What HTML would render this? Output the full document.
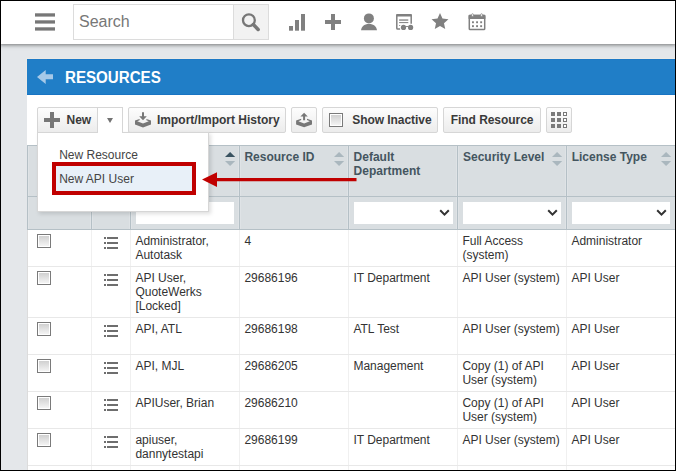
<!DOCTYPE html><html><head><meta charset="utf-8"><style>
*{box-sizing:border-box;margin:0;padding:0}
html,body{width:676px;height:471px;overflow:hidden;background:#e4e7ea;font-family:"Liberation Sans",sans-serif;position:relative}
.a{position:absolute}
.t{position:absolute;white-space:nowrap;font-size:12px;line-height:14px;color:#333}
.b{font-weight:bold}
#hdr{left:0;top:0;width:676px;height:44px;background:#fff;box-shadow:0 1px 4px rgba(0,0,0,.5)}
.btn{position:absolute;top:107px;height:26px;border:1px solid #d6d6d6;border-radius:2px;background:linear-gradient(#fdfdfd,#ececec)}
.cb{position:absolute;width:14px;height:14px;border:1px solid #7a7a7a;background:linear-gradient(#cdcdcd,#f7f7f7);box-shadow:inset 0 0 0 1px #fff}
.sort{position:absolute;width:10px;height:14px}
.sel{position:absolute;top:202px;height:22px;background:#fff}
</style></head><body><div id="hdr" class="a"></div>
<svg class="a" style="left:35px;top:13px" width="20" height="4" viewBox="0 0 20 4"><rect x="0" y="0.3" width="20" height="3.3" fill="#777"/></svg>
<svg class="a" style="left:35px;top:20px" width="20" height="4" viewBox="0 0 20 4"><rect x="0" y="0.3" width="20" height="3.3" fill="#777"/></svg>
<svg class="a" style="left:35px;top:27px" width="20" height="4" viewBox="0 0 20 4"><rect x="0" y="0.3" width="20" height="3.3" fill="#777"/></svg>
<div class="a" style="left:73px;top:4px;width:196px;height:36px;border:1px solid #dcdcdc;background:#fff"></div>
<div class="a" style="left:233px;top:5px;width:35px;height:34px;border-left:1px solid #dcdcdc;background:#f2f2f2"></div>
<div class="t " style="left:79px;top:13px;font-size:16px;line-height:18px;color:#777">Search</div>
<svg class="a" style="left:238px;top:10px" width="24" height="24" viewBox="0 0 24 24"><circle cx="10.9" cy="10.2" r="5.9" fill="none" stroke="#777" stroke-width="2.3"/><path d="M15.3 14.6 L20.1 19.4" stroke="#777" stroke-width="3.6" stroke-linecap="round"/></svg>
<svg class="a" style="left:280px;top:8px" width="30" height="26" viewBox="280 8 30 26"><rect x="289" y="26" width="4" height="4.7" fill="#808080"/><rect x="295" y="20" width="4" height="10.7" fill="#808080"/><rect x="301" y="14" width="4" height="16.7" fill="#808080"/></svg>
<svg class="a" style="left:320px;top:8px" width="26" height="26" viewBox="320 8 26 26"><rect x="325" y="20" width="16" height="4" fill="#808080"/><rect x="331" y="14" width="4" height="16" fill="#808080"/></svg>
<svg class="a" style="left:356px;top:8px" width="26" height="26" viewBox="356 8 26 26"><circle cx="368.9" cy="18.4" r="5.0" fill="#808080"/><path d="M361 30.3 C361.5 26.5 364 24 369 24 C374 24 376.5 26.5 377 30.3 Z" fill="#808080"/></svg>
<svg class="a" style="left:390px;top:8px" width="26" height="26" viewBox="390 8 26 26"><path d="M411.2 23.8 V15.6 Q411.2 14.9 410.4 14.9 H397.6 Q396.8 14.9 396.8 15.6 V28.2 Q396.8 29 397.6 29 H400.2" fill="none" stroke="#808080" stroke-width="1.5"/><rect x="396.1" y="14.1" width="15.8" height="2.4" rx="1" fill="#808080"/><rect x="399.1" y="19.4" width="9.2" height="1.3" fill="#808080"/><rect x="399.1" y="22.1" width="9.2" height="1" fill="#808080"/><circle cx="403.5" cy="27.4" r="3.3" fill="#fff"/><circle cx="410.6" cy="27.4" r="3.3" fill="#fff"/><circle cx="403.5" cy="27.4" r="2.6" fill="#808080"/><circle cx="410.6" cy="27.4" r="2.6" fill="#808080"/><rect x="405.5" y="26.1" width="3" height="0.9" fill="#808080"/><rect x="399.2" y="25" width="1" height="1" fill="#808080"/></svg>
<svg class="a" style="left:428px;top:8px" width="24" height="24" viewBox="428 8 24 24"><path d="M440.00 13.00 L442.47 18.50 L448.46 19.15 L443.99 23.20 L445.23 29.10 L440.00 26.10 L434.77 29.10 L436.01 23.20 L431.54 19.15 L437.53 18.50 Z" fill="#808080"/></svg>
<svg class="a" style="left:465px;top:8px" width="24" height="26" viewBox="465 8 24 26"><rect x="469.3" y="15.6" width="15.4" height="13.9" rx="0.8" fill="none" stroke="#808080" stroke-width="1.5"/><rect x="468.6" y="14.8" width="16.8" height="4.2" rx="0.6" fill="#808080"/><rect x="471.7" y="13.7" width="1.7" height="2.9" rx="0.85" fill="#fff" stroke="#808080" stroke-width="0.7"/><rect x="480.7" y="13.7" width="1.7" height="2.9" rx="0.85" fill="#fff" stroke="#808080" stroke-width="0.7"/><rect x="472.0" y="21.3" width="1.9" height="1.9" fill="#808080"/><rect x="472.0" y="25.200000000000003" width="1.9" height="1.9" fill="#808080"/><rect x="476.1" y="21.3" width="1.9" height="1.9" fill="#808080"/><rect x="476.1" y="25.200000000000003" width="1.9" height="1.9" fill="#808080"/><rect x="480.20000000000005" y="21.3" width="1.9" height="1.9" fill="#808080"/><rect x="480.20000000000005" y="25.200000000000003" width="1.9" height="1.9" fill="#808080"/></svg>
<div class="a" style="left:26px;top:58px;width:650px;height:37px;background:#ebeae6"></div>
<div class="a" style="left:27px;top:59px;width:649px;height:36px;background:#207ec7;border-top:1px solid #1c79c6;border-bottom:1px solid #1874c3"></div>
<div class="a" style="left:27px;top:95px;width:649px;height:380px;background:#fff"></div>
<svg class="a" style="left:35px;top:68px" width="20" height="18" viewBox="35 68 20 18"><path d="M37 77 L45.7 70 V74.3 H53 V79.2 H45.7 V84 Z" fill="#a6c9e8"/></svg>
<div class="t b" style="left:65.2px;top:69px;font-size:16px;line-height:18px;color:#fff;transform:scaleX(0.945);transform-origin:0 0">RESOURCES</div>
<div class="btn" style="left:37px;width:61px;border-radius:2px 0 0 0;z-index:6"></div>
<div class="a" style="left:97px;top:107px;width:26px;height:26px;border:1px solid #d6d6d6;border-bottom:none;background:#fff;z-index:5"></div>
<svg class="a" style="left:44px;top:112px;z-index:6" width="16" height="16" viewBox="0 0 16 16"><rect x="0" y="6" width="16" height="4" fill="#777"/><rect x="6" y="0" width="4" height="16" fill="#777"/></svg>
<div class="t b" style="left:66.5px;top:112.7px;color:#3a3a3a;z-index:7">New</div>
<svg class="a" style="left:106px;top:117px;z-index:6" width="8" height="7" viewBox="106 117 8 7"><path d="M107 118 H113 L110 123 Z" fill="#737373"/></svg>
<div class="btn" style="left:128px;width:158px"></div>
<svg class="a" style="left:133px;top:110px" width="20" height="20" viewBox="133 110 20 20"><path d="M142 112.3 H144 V116.3 H146.8 L143 120.2 L139.2 116.3 H142 Z" fill="#777"/><path d="M135 120.5 L139.6 119 V120.3 L137.2 121.3 L143 123.5 L148.8 121.3 L146.4 120.3 V119 L151 120.5 V124.4 L143 127.4 L135 124.4 Z" fill="#777"/></svg>
<div class="t b" style="left:157px;top:112.7px;color:#3a3a3a">Import/Import History</div>
<div class="btn" style="left:291px;width:26px"></div>
<svg class="a" style="left:294px;top:110px" width="20" height="20" viewBox="294 110 20 20"><path d="M304.1 112.8 L307.8 116.4 H305.1 V120.2 H303.1 V116.4 H300.4 Z" fill="#777"/><path d="M296.1 120.5 L301.2 118.7 V120 L298.4 121.2 L304.1 123.5 L309.8 121.2 L307 120 V118.7 L312 120.5 V124.4 L304.1 127.2 L296.1 124.4 Z" fill="#777"/></svg>
<div class="btn" style="left:322px;width:116px"></div>
<div class="cb" style="left:329px;top:113px"></div>
<div class="t b" style="left:352.3px;top:112.7px;color:#3a3a3a;letter-spacing:-0.06px">Show Inactive</div>
<div class="btn" style="left:443px;width:98px"></div>
<div class="t b" style="left:450.8px;top:112.7px;color:#3a3a3a;letter-spacing:-0.06px">Find Resource</div>
<div class="btn" style="left:546px;width:26px"></div>
<svg class="a" style="left:546px;top:107px" width="26" height="26" viewBox="546 107 26 26"><rect x="551" y="112" width="4" height="4" fill="#7a7a7a"/><rect x="557" y="112" width="4" height="4" fill="#7a7a7a"/><rect x="563.5" y="112.5" width="3" height="3" fill="#fff" stroke="#777" stroke-width="1"/><rect x="551" y="118" width="4" height="4" fill="#7a7a7a"/><rect x="557" y="118" width="4" height="4" fill="#7a7a7a"/><rect x="563.5" y="118.5" width="3" height="3" fill="#fff" stroke="#777" stroke-width="1"/><rect x="551" y="124" width="4" height="4" fill="#7a7a7a"/><rect x="557" y="124" width="4" height="4" fill="#7a7a7a"/><rect x="563.5" y="124.5" width="3" height="3" fill="#fff" stroke="#777" stroke-width="1"/></svg>
<div class="a" style="left:27px;top:145px;width:648px;height:84px;background:#d9dee1;border-top:1px solid #b5c0c6"></div>
<div class="a" style="left:90px;top:146px;width:3px;height:83px;background:#dfe3e6"></div>
<div class="a" style="left:129px;top:146px;width:3px;height:83px;background:#dfe3e6"></div>
<div class="a" style="left:238px;top:146px;width:3px;height:83px;background:#dfe3e6"></div>
<div class="a" style="left:347px;top:146px;width:3px;height:83px;background:#dfe3e6"></div>
<div class="a" style="left:456px;top:146px;width:3px;height:83px;background:#dfe3e6"></div>
<div class="a" style="left:565px;top:146px;width:3px;height:83px;background:#dfe3e6"></div>
<div class="a" style="left:28px;top:146px;width:1px;height:83px;background:#dfe3e6"></div>
<div class="a" style="left:27px;top:196px;width:648px;height:1px;background:#b5c0c6"></div>
<div class="a" style="left:27px;top:229px;width:648px;height:1px;background:#b5c0c6"></div>
<div class="a" style="left:27px;top:145px;width:1px;height:84px;background:#b5c0c6"></div>
<div class="a" style="left:91px;top:145px;width:1px;height:84px;background:#b5c0c6"></div>
<div class="a" style="left:130px;top:145px;width:1px;height:84px;background:#b5c0c6"></div>
<div class="a" style="left:239px;top:145px;width:1px;height:84px;background:#b5c0c6"></div>
<div class="a" style="left:348px;top:145px;width:1px;height:84px;background:#b5c0c6"></div>
<div class="a" style="left:457px;top:145px;width:1px;height:84px;background:#b5c0c6"></div>
<div class="a" style="left:566px;top:145px;width:1px;height:84px;background:#b5c0c6"></div>
<div class="a" style="left:91px;top:230px;width:1px;height:241px;background:#f0f0f0"></div>
<div class="a" style="left:130px;top:230px;width:1px;height:241px;background:#f0f0f0"></div>
<div class="a" style="left:239px;top:230px;width:1px;height:241px;background:#f0f0f0"></div>
<div class="a" style="left:348px;top:230px;width:1px;height:241px;background:#f0f0f0"></div>
<div class="a" style="left:457px;top:230px;width:1px;height:241px;background:#f0f0f0"></div>
<div class="a" style="left:566px;top:230px;width:1px;height:241px;background:#f0f0f0"></div>
<div class="a" style="left:27px;top:230px;width:1px;height:241px;background:#dcdcdc"></div>
<div class="a" style="left:28px;top:266px;width:647px;height:1px;background:#e8e8e8"></div>
<div class="a" style="left:28px;top:317px;width:647px;height:1px;background:#e8e8e8"></div>
<div class="a" style="left:28px;top:354px;width:647px;height:1px;background:#e8e8e8"></div>
<div class="a" style="left:28px;top:391px;width:647px;height:1px;background:#e8e8e8"></div>
<div class="a" style="left:28px;top:428px;width:647px;height:1px;background:#e8e8e8"></div>
<div class="a" style="left:28px;top:465px;width:647px;height:1px;background:#e8e8e8"></div>
<div class="t b" style="left:244.4px;top:150px;color:#44555f">Resource ID</div>
<div class="t b" style="left:353.6px;top:150px;color:#44555f">Default<br>Department</div>
<div class="t b" style="left:463px;top:150px;color:#44555f">Security Level</div>
<div class="t b" style="left:571.7px;top:150px;color:#44555f">License Type</div>
<svg class="a" style="left:224.5px;top:151px" width="11" height="16" viewBox="0 0 11 16"><path d="M0 6.1 L5.1 0.9 L10.2 6.1 Z" fill="#3a5361"/><path d="M0 9.9 L5.1 14.9 L10.2 9.9 Z" fill="#aab7be"/></svg>
<svg class="a" style="left:333.5px;top:151px" width="11" height="16" viewBox="0 0 11 16"><path d="M0 6.1 L5.1 0.9 L10.2 6.1 Z" fill="#aab7be"/><path d="M0 9.9 L5.1 14.9 L10.2 9.9 Z" fill="#aab7be"/></svg>
<svg class="a" style="left:551.5px;top:151px" width="11" height="16" viewBox="0 0 11 16"><path d="M0 6.1 L5.1 0.9 L10.2 6.1 Z" fill="#aab7be"/><path d="M0 9.9 L5.1 14.9 L10.2 9.9 Z" fill="#aab7be"/></svg>
<svg class="a" style="left:660.5px;top:151px" width="11" height="16" viewBox="0 0 11 16"><path d="M0 6.1 L5.1 0.9 L10.2 6.1 Z" fill="#aab7be"/><path d="M0 9.9 L5.1 14.9 L10.2 9.9 Z" fill="#aab7be"/></svg>
<div class="sel" style="left:136px;width:98px"></div>
<div class="sel" style="left:354px;width:98.5px"></div>
<svg class="a" style="left:438.5px;top:208px" width="11" height="9" viewBox="0 0 11 9"><path d="M1.2 2.2 L5.5 6.6 L9.8 2.2" fill="none" stroke="#333" stroke-width="2"/></svg>
<div class="sel" style="left:462.5px;width:98.5px"></div>
<svg class="a" style="left:547.0px;top:208px" width="11" height="9" viewBox="0 0 11 9"><path d="M1.2 2.2 L5.5 6.6 L9.8 2.2" fill="none" stroke="#333" stroke-width="2"/></svg>
<div class="sel" style="left:571.5px;width:98.5px"></div>
<svg class="a" style="left:656.0px;top:208px" width="11" height="9" viewBox="0 0 11 9"><path d="M1.2 2.2 L5.5 6.6 L9.8 2.2" fill="none" stroke="#333" stroke-width="2"/></svg>
<div class="cb" style="left:37px;top:234px"></div>
<svg class="a" style="left:104px;top:229px" width="16" height="24" viewBox="0 0 16 24"><rect x="0" y="8" width="2" height="2" fill="#6e6e6e"/><rect x="3" y="8" width="11" height="2" fill="#6e6e6e"/><rect x="0" y="13" width="2" height="2" fill="#6e6e6e"/><rect x="3" y="13" width="11" height="2" fill="#6e6e6e"/><rect x="0" y="18" width="2" height="2" fill="#6e6e6e"/><rect x="3" y="18" width="11" height="2" fill="#6e6e6e"/></svg>
<div class="t " style="left:135.4px;top:234px;">Administrator,<br>Autotask</div>
<div class="t " style="left:244.4px;top:234px;">4</div>
<div class="t " style="left:462.4px;top:234px;">Full Access<br>(system)</div>
<div class="t " style="left:571.4px;top:234px;">Administrator</div>
<div class="cb" style="left:37px;top:271px"></div>
<svg class="a" style="left:104px;top:266px" width="16" height="24" viewBox="0 0 16 24"><rect x="0" y="8" width="2" height="2" fill="#6e6e6e"/><rect x="3" y="8" width="11" height="2" fill="#6e6e6e"/><rect x="0" y="13" width="2" height="2" fill="#6e6e6e"/><rect x="3" y="13" width="11" height="2" fill="#6e6e6e"/><rect x="0" y="18" width="2" height="2" fill="#6e6e6e"/><rect x="3" y="18" width="11" height="2" fill="#6e6e6e"/></svg>
<div class="t " style="left:135.4px;top:271px;">API User,<br>QuoteWerks<br>[Locked]</div>
<div class="t " style="left:244.4px;top:271px;">29686196</div>
<div class="t " style="left:353.4px;top:271px;">IT Department</div>
<div class="t " style="left:462.4px;top:271px;">API User (system)</div>
<div class="t " style="left:571.4px;top:271px;">API User</div>
<div class="cb" style="left:37px;top:322px"></div>
<svg class="a" style="left:104px;top:317px" width="16" height="24" viewBox="0 0 16 24"><rect x="0" y="8" width="2" height="2" fill="#6e6e6e"/><rect x="3" y="8" width="11" height="2" fill="#6e6e6e"/><rect x="0" y="13" width="2" height="2" fill="#6e6e6e"/><rect x="3" y="13" width="11" height="2" fill="#6e6e6e"/><rect x="0" y="18" width="2" height="2" fill="#6e6e6e"/><rect x="3" y="18" width="11" height="2" fill="#6e6e6e"/></svg>
<div class="t " style="left:135.4px;top:322px;">API, ATL</div>
<div class="t " style="left:244.4px;top:322px;">29686198</div>
<div class="t " style="left:353.4px;top:322px;">ATL Test</div>
<div class="t " style="left:462.4px;top:322px;">API User (system)</div>
<div class="t " style="left:571.4px;top:322px;">API User</div>
<div class="cb" style="left:37px;top:359px"></div>
<svg class="a" style="left:104px;top:354px" width="16" height="24" viewBox="0 0 16 24"><rect x="0" y="8" width="2" height="2" fill="#6e6e6e"/><rect x="3" y="8" width="11" height="2" fill="#6e6e6e"/><rect x="0" y="13" width="2" height="2" fill="#6e6e6e"/><rect x="3" y="13" width="11" height="2" fill="#6e6e6e"/><rect x="0" y="18" width="2" height="2" fill="#6e6e6e"/><rect x="3" y="18" width="11" height="2" fill="#6e6e6e"/></svg>
<div class="t " style="left:135.4px;top:359px;">API, MJL</div>
<div class="t " style="left:244.4px;top:359px;">29686205</div>
<div class="t " style="left:353.4px;top:359px;">Management</div>
<div class="t " style="left:462.4px;top:359px;">Copy (1) of API<br>User (system)</div>
<div class="t " style="left:571.4px;top:359px;">API User</div>
<div class="cb" style="left:37px;top:396px"></div>
<svg class="a" style="left:104px;top:391px" width="16" height="24" viewBox="0 0 16 24"><rect x="0" y="8" width="2" height="2" fill="#6e6e6e"/><rect x="3" y="8" width="11" height="2" fill="#6e6e6e"/><rect x="0" y="13" width="2" height="2" fill="#6e6e6e"/><rect x="3" y="13" width="11" height="2" fill="#6e6e6e"/><rect x="0" y="18" width="2" height="2" fill="#6e6e6e"/><rect x="3" y="18" width="11" height="2" fill="#6e6e6e"/></svg>
<div class="t " style="left:135.4px;top:396px;">APIUser, Brian</div>
<div class="t " style="left:244.4px;top:396px;">29686210</div>
<div class="t " style="left:462.4px;top:396px;">Copy (1) of API<br>User (system)</div>
<div class="t " style="left:571.4px;top:396px;">API User</div>
<div class="cb" style="left:37px;top:433px"></div>
<svg class="a" style="left:104px;top:428px" width="16" height="24" viewBox="0 0 16 24"><rect x="0" y="8" width="2" height="2" fill="#6e6e6e"/><rect x="3" y="8" width="11" height="2" fill="#6e6e6e"/><rect x="0" y="13" width="2" height="2" fill="#6e6e6e"/><rect x="3" y="13" width="11" height="2" fill="#6e6e6e"/><rect x="0" y="18" width="2" height="2" fill="#6e6e6e"/><rect x="3" y="18" width="11" height="2" fill="#6e6e6e"/></svg>
<div class="t " style="left:135.4px;top:433px;">apiuser,<br>dannytestapi</div>
<div class="t " style="left:244.4px;top:433px;">29686199</div>
<div class="t " style="left:353.4px;top:433px;">IT Department</div>
<div class="t " style="left:462.4px;top:433px;">API User (system)</div>
<div class="t " style="left:571.4px;top:433px;">API User</div>
<div class="cb" style="left:37px;top:470px"></div>
<div class="a" style="left:37px;top:132px;width:172px;height:80px;background:#fff;border:1px solid #d6d6d6;box-shadow:2px 2px 4px rgba(0,0,0,.13);z-index:4"></div>
<div class="t " style="left:59.2px;top:148px;color:#444;z-index:6">New Resource</div>
<div class="a" style="left:52px;top:162px;width:144px;height:33px;background:#e8f0f8;border:4px solid #c00000;z-index:6"></div>
<div class="t " style="left:59.2px;top:172px;color:#444;z-index:7">New API User</div>
<svg class="a" style="left:0;top:0;z-index:8" width="676" height="471" viewBox="0 0 676 471"><path d="M202 179.6 L217 172.3 V178 H356.5 V181.2 H217 V187 Z" fill="#c00000"/></svg>
<div class="a" style="left:0;top:0;width:676px;height:471px;border:1px solid #000;z-index:20"></div></body></html>
